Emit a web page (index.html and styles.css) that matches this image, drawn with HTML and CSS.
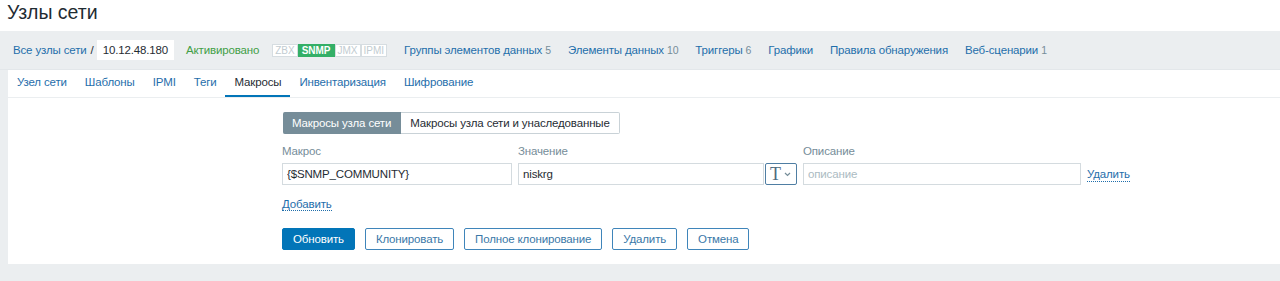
FILE: index.html
```html
<!DOCTYPE html>
<html lang="ru">
<head>
    <meta charset="UTF-8">
    <title>Узлы сети</title>
    <link rel="stylesheet" href="styles.css">
</head>
<body>
    <header class="page-title">
        <h1>Узлы сети</h1>
    </header>
    <div class="host-nav">
        <span class="crumbs">
            <a href="#">Все узлы сети</a>
            <span class="sep">/</span>
            <span class="host-name">10.12.48.180</span>
        </span>
        <span class="status-on">Активировано</span>
        <span class="status-box">
            <span class="badge">ZBX</span><span class="badge badge-green">SNMP</span><span class="badge">JMX</span><span class="badge">IPMI</span>
        </span>
        <a class="link" href="#">Группы элементов данных <span class="count">5</span></a>
        <a class="link" href="#">Элементы данных <span class="count">10</span></a>
        <a class="link" href="#">Триггеры <span class="count">6</span></a>
        <a class="link" href="#">Графики</a>
        <a class="link" href="#">Правила обнаружения</a>
        <a class="link" href="#">Веб-сценарии <span class="count">1</span></a>
    </div>
    <div class="content">
        <ul class="tabs">
            <li><a href="#">Узел сети</a></li>
            <li><a href="#">Шаблоны</a></li>
            <li><a href="#">IPMI</a></li>
            <li><a href="#">Теги</a></li>
            <li class="active"><a href="#">Макросы</a></li>
            <li><a href="#">Инвентаризация</a></li>
            <li><a href="#">Шифрование</a></li>
        </ul>
        <div class="form">
            <div class="toggle">
                <span class="toggle-item selected">Макросы узла сети</span><span class="toggle-item">Макросы узла сети и унаследованные</span>
            </div>
            <div class="macros">
                <span class="label">Макрос</span>
                <span class="label">Значение</span>
                <span class="label">Описание</span>
                <span></span>
                <input class="field" type="text" value="{$SNMP_COMMUNITY}">
                <div class="value-cell">
                    <input class="field" type="text" value="niskrg">
                    <button class="type-btn">T<svg width="7" height="5" viewBox="0 0 7 5"><path d="M1 1l2.5 2.5L6 1" fill="none" stroke="#768d99" stroke-width="1.2"/></svg></button>
                </div>
                <input class="field" type="text" placeholder="описание">
                <a class="dotted" href="#">Удалить</a>
            </div>
            <div class="add-row">
                <a class="dotted" href="#">Добавить</a>
            </div>
            <div class="buttons">
                <button class="btn btn-main">Обновить</button>
                <button class="btn">Клонировать</button>
                <button class="btn">Полное клонирование</button>
                <button class="btn">Удалить</button>
                <button class="btn">Отмена</button>
            </div>
        </div>
    </div>
</body>
</html>
```

FILE: styles.css
```css
body {
    margin: 0;
    background-color: #ebeef0;
    color: #1f2c33;
    font-family: "Liberation Sans", Arial, sans-serif;
    font-size: 11.5px;
    letter-spacing: -0.15px;
}

a {
    text-decoration: none;
    color: #1f6eab;
}

.page-title {
    background-color: #fff;
    height: 31px;
    padding-left: 7px;
}

h1 {
    margin: 0;
    font-size: 19.5px;
    font-weight: normal;
    line-height: 25px;
    letter-spacing: 0;
}

.host-nav {
    height: 38px;
    display: flex;
    align-items: center;
    padding-left: 13px;
    border-bottom: 1px solid #e3e7ea;
}

.crumbs {
    display: flex;
    align-items: center;
    margin-right: 12px;
}

.host-nav .link {
    margin-right: 17px;
}

.sep {
    margin: 0 3px 0 4px;
    color: #1f2c33;
}

.host-name {
    background-color: #fff;
    padding: 0 6px;
    line-height: 20px;
}

.status-on {
    color: #429e47;
    margin-right: 13px;
}

.count {
    color: #768d99;
    font-size: 10.5px;
}

.status-box {
    display: flex;
    margin-right: 17px;
}

.badge {
    font-size: 10px;
    line-height: 11px;
    padding: 0 2px;
    border: 1px solid #d6dde1;
    color: #c2ccd1;
    background-color: #fff;
    letter-spacing: 0;
}

.badge-green {
    background-color: #34af67;
    border-color: #34af67;
    color: #fff;
    font-weight: bold;
    padding: 0 3px;
}

.content {
    margin-left: 8px;
    background-color: #fff;
}

.tabs {
    display: flex;
    margin: 0;
    padding: 0;
    list-style: none;
    border-bottom: 1px solid #ebeef0;
}

.tabs li a {
    display: block;
    padding: 0 9px;
    line-height: 25px;
    border-bottom: 2px solid transparent;
}

.tabs li.active a {
    color: #1f2c33;
    border-bottom-color: #0275b8;
}

.form {
    padding: 14px 0 14px 274px;
}

.toggle {
    display: flex;
}

.toggle-item {
    line-height: 20px;
    padding: 0 9px;
    border: 1px solid #c9d2d7;
    border-left: none;
    border-radius: 0 2px 2px 0;
}

.toggle-item.selected {
    background-color: #768d99;
    border-color: #768d99;
    color: #fff;
    border-radius: 2px 0 0 2px;
    margin-left: 1px;
}

.macros {
    display: grid;
    grid-template-columns: 230px 279px 278px auto;
    column-gap: 6px;
    row-gap: 3px;
    margin-top: 8px;
    align-items: center;
}

.label {
    color: #768d99;
    line-height: 18px;
}

.field {
    box-sizing: border-box;
    height: 22px;
    border: 1px solid #d4dbdf;
    padding: 0 4px;
    font-family: "Liberation Sans", Arial, sans-serif;
    font-size: 11.5px;
    letter-spacing: -0.15px;
    color: #1f2c33;
    width: 100%;
}

.field::placeholder {
    color: #acbbc2;
}

.value-cell {
    display: flex;
}

.type-btn {
    box-sizing: border-box;
    width: 32px;
    height: 22px;
    margin-left: 1px;
    flex-shrink: 0;
    border: 1px solid #4f7ea3;
    border-radius: 2px;
    background-color: #fff;
    padding: 0 0 0 4px;
    display: flex;
    align-items: center;
    gap: 3px;
    font-family: "Liberation Serif", serif;
    font-size: 18px;
    color: #4f6b80;
}

.dotted {
    border-bottom: 1px dotted #1f6eab;
    line-height: 14px;
    justify-self: start;
}

.add-row {
    margin-top: 12px;
    height: 16px;
}

.buttons {
    display: flex;
    gap: 10px;
    margin-top: 15px;
}

.btn {
    height: 22px;
    padding: 0 10px;
    border: 1px solid #3f85ba;
    border-radius: 2px;
    background-color: #fff;
    color: #3a78a8;
    font-family: "Liberation Sans", Arial, sans-serif;
    font-size: 11.5px;
    letter-spacing: -0.15px;
}

.btn-main {
    background-color: #0275b8;
    border-color: #0275b8;
    color: #fff;
}
```
